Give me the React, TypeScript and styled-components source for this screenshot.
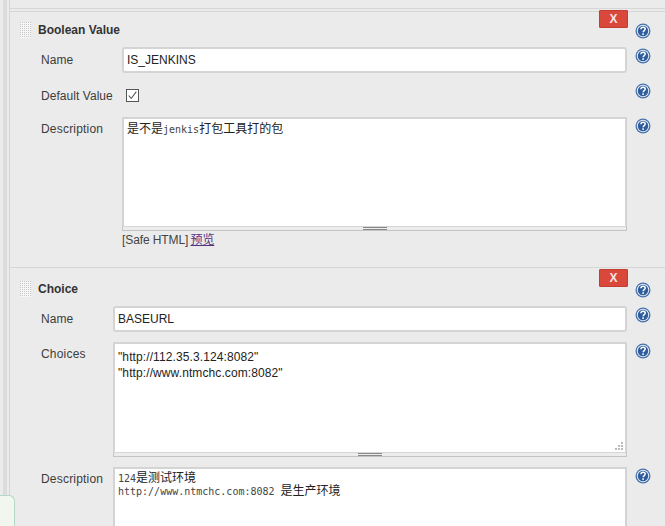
import styled, { createGlobalStyle } from "styled-components";

const GlobalStyle = createGlobalStyle`
  html, body {
    margin: 0;
    padding: 0;
    height: 526px;
    overflow: hidden;
    background: #ebebeb;
  }
  body {
    font-family: "Liberation Sans", Arial, sans-serif;
    font-size: 12px;
    color: #333;
  }
`;

const HelpIcon = ({ top = 1 }: { top?: number }) => (
  <HelpSlot $top={top}>
    <HelpSvg viewBox="0 0 16 16" aria-hidden="true">
      <circle cx="8" cy="8" r="7.5" fill="#4672ad" />
      <circle cx="8" cy="8" r="6.2" fill="#e3ebf5" />
      <circle cx="8" cy="8" r="5.2" fill="#2f5c9a" />
      <path
        d="M5.9 6.3c.1-1.300 1-2 2.200-2 1.300 0 2.100.8 2.100 1.800 0 1.500-2 1.500-2 3.100"
        fill="none"
        stroke="#fff"
        strokeWidth="1.500"
      />
      <rect x="7.300" y="10.300" width="1.600" height="1.600" fill="#fff" />
    </HelpSvg>
  </HelpSlot>
);

const GripDots = ({ id }: { id: string }) => (
  <DragHandle viewBox="0 0 11 16" aria-hidden="true">
    <defs>
      <pattern id={id} width="2" height="2" patternUnits="userSpaceOnUse">
        <rect width="2" height="2" fill="#f6f6f6" />
        <rect width="1" height="1" fill="#c6c6c6" />
      </pattern>
    </defs>
    <rect width="11" height="16" fill={`url(#${id})`} />
  </DragHandle>
);

const ResizeDots = () => (
  <ResizeMark viewBox="0 0 9 9" aria-hidden="true">
    <rect x="6" y="0" width="2" height="2" fill="#bbb" />
    <rect x="3" y="3" width="2" height="2" fill="#bbb" />
    <rect x="6" y="3" width="2" height="2" fill="#bbb" />
    <rect x="0" y="6" width="2" height="2" fill="#bbb" />
    <rect x="3" y="6" width="2" height="2" fill="#bbb" />
    <rect x="6" y="6" width="2" height="2" fill="#bbb" />
  </ResizeMark>
);

export default function App() {
  return (
    <>
      <GlobalStyle />
      <Page>
        <Rail />
        <Sections>
          <PreviousSection />
          <Section $first>
            <SectionHeader>
              <GripDots id="grip-boolean" />
              <SectionTitle>Boolean Value</SectionTitle>
              <DeleteButton>X</DeleteButton>
              <HelpIcon top={14} />
            </SectionHeader>
            <Form $labelWidth={112}>
              <Label>Name</Label>
              <TextInput>IS_JENKINS</TextInput>
              <HelpIcon />

              <Label>Default Value</Label>
              <CheckCell>
                <CheckBox>
                  <svg viewBox="0 0 13 13" width="11" height="11">
                    <path d="M2 6.500l3 3.500 6-8" fill="none" stroke="#555" strokeWidth="1.300" />
                  </svg>
                </CheckBox>
              </CheckCell>
              <HelpIcon top={0} />

              <Label $area>Description</Label>
              <div>
                <TextBlock $height={109} $padTop={2}>
                  <RichLine>
                    是不是<Mono>jenkis</Mono>打包工具打的包
                  </RichLine>
                </TextBlock>
                <Grippie />
                <SafeHtml>
                  [Safe HTML] <PreviewLink>预览</PreviewLink>
                </SafeHtml>
              </div>
              <HelpIcon />
            </Form>
          </Section>

          <Section>
            <SectionHeader>
              <GripDots id="grip-choice" />
              <SectionTitle>Choice</SectionTitle>
              <DeleteButton>X</DeleteButton>
              <HelpIcon top={14} />
            </SectionHeader>
            <Form $labelWidth={103}>
              <Label>Name</Label>
              <TextInput>BASEURL</TextInput>
              <HelpIcon />

              <Label $area>Choices</Label>
              <div>
                <TextBlock $height={110} $padTop={5}>
                  <PlainLine>"http://112.35.3.124:8082"</PlainLine>
                  <PlainLine>"http://www.ntmchc.com:8082"</PlainLine>
                  <ResizeDots />
                </TextBlock>
                <Grippie />
              </div>
              <HelpIcon />

              <Label $area>Description</Label>
              <TextBlock $height={80} $padTop={1}>
                <RichLine>
                  <Mono>124</Mono>是测试环境
                </RichLine>
                <RichLine>
                  <Mono>http://www.ntmchc.com:8082 </Mono>是生产环境
                </RichLine>
              </TextBlock>
              <HelpIcon />
            </Form>
          </Section>
        </Sections>
      </Page>
      <FloatingTab />
    </>
  );
}

const Page = styled.div`
  display: flex;
  height: 526px;
  overflow: hidden;
  padding-left: 3px;
  background: #ebebeb;
`;

const Rail = styled.div`
  flex: 0 0 4px;
  margin-right: 2px;
  background: #dcdcdc;
`;

const Sections = styled.div`
  flex: 1;
  min-width: 0;
`;

const PreviousSection = styled.div`
  height: 8px;
  border-left: 1px solid #d6d6d6;
  border-bottom: 1px solid #d6d6d6;
`;

const Section = styled.section<{ $first?: boolean }>`
  position: relative;
  box-sizing: border-box;
  height: ${(p) => (p.$first ? "258px" : "259px")};
  padding-right: 14px;
  border-left: 1px solid #d6d6d6;
  border-top: ${(p) => (p.$first ? "0" : "1px solid #d6d6d6")};

  ${(p) =>
    p.$first &&
    `&::before {
      content: "";
      position: absolute;
      left: 0;
      right: 0;
      top: 2px;
      border-top: 1px solid #d6d6d6;
    }`}
`;

const SectionHeader = styled.header`
  position: relative;
  display: flex;
  align-items: flex-start;
  height: 38px;
  padding-left: 10px;
`;

const DragHandle = styled.svg`
  width: 11px;
  height: 16px;
  margin: 13px 7px 0 0;
`;

const SectionTitle = styled.h3`
  margin: 14px auto 0 0;
  font-size: 12px;
  line-height: 14px;
  font-weight: 700;
  color: #333;
`;

const DeleteButton = styled.button`
  width: 29px;
  height: 18px;
  margin: 1px -1px 0 0;
  padding: 0;
  border: 1px solid #c43d31;
  border-radius: 1px;
  background: #d9483b;
  color: #f8e4e0;
  font: 700 12px "Liberation Sans", Arial, sans-serif;
`;

const HelpSlot = styled.div<{ $top: number }>`
  width: 24px;
  padding-top: ${(p) => p.$top}px;
  display: flex;
  justify-content: flex-end;
`;

const HelpSvg = styled.svg`
  width: 16px;
  height: 16px;
  display: block;
`;

const Form = styled.div<{ $labelWidth: number }>`
  display: grid;
  grid-template-columns: ${(p) => p.$labelWidth}px 1fr 24px;
  row-gap: 10px;
`;

const Label = styled.div<{ $area?: boolean }>`
  padding: ${(p) => (p.$area ? "5px" : "6px")} 0 0 31px;
  line-height: 14px;
  letter-spacing: ${(p) => (p.$area ? "0.2px" : "0.05px")};
  color: #3c3c3c;
`;

const TextInput = styled.div`
  box-sizing: border-box;
  height: 26px;
  padding: 0 3px;
  border: 2px solid #d4d4d4;
  border-radius: 3px;
  background: #fff;
  line-height: 23px;
  color: #222;
`;

const CheckCell = styled.div`
  height: 24px;
  padding-left: 4px;
  display: flex;
  align-items: center;
`;

const CheckBox = styled.div`
  box-sizing: border-box;
  width: 13px;
  height: 13px;
  border: 1px solid #555;
  background: #fff;
  display: flex;
  align-items: center;
  justify-content: center;
`;

const TextBlock = styled.div<{ $height: number; $padTop: number }>`
  position: relative;
  box-sizing: border-box;
  height: ${(p) => p.$height}px;
  padding: ${(p) => p.$padTop}px 0 0 3px;
  border: 2px solid #d4d4d4;
  border-bottom-width: 0;
  background: #fff;
`;

const ResizeMark = styled.svg`
  position: absolute;
  right: 1px;
  bottom: 1px;
  width: 9px;
  height: 9px;
`;

const RichLine = styled.div`
  height: 13px;
  font-family: "Noto Sans CJK SC", sans-serif;
  font-size: 12px;
  line-height: 13px;
  white-space: pre;
  color: #222;
`;

const Mono = styled.span`
  font-family: "DejaVu Sans Mono", monospace;
  font-size: 10px;
  color: #444;
`;

const PlainLine = styled.div`
  line-height: 16px;
  letter-spacing: 0.1px;
  color: #222;
`;

const Grippie = styled.div`
  box-sizing: border-box;
  height: 5px;
  border: 1px solid #c4c4c4;
  border-top-color: #d6d6d6;
  background: linear-gradient(#888, #888) center 0 / 24px 1px no-repeat,
    linear-gradient(#888, #888) center 2px / 24px 1px no-repeat, #ececec;
`;

const SafeHtml = styled.div`
  line-height: 14px;
  height: 16px;
  padding-top: 1px;
  letter-spacing: -0.1px;
  color: #444;
`;

const PreviewLink = styled.a`
  margin-left: -1px;
  font-family: "Noto Sans CJK SC", sans-serif;
  color: #55307f;
  text-decoration: underline;
`;

const FloatingTab = styled.div`
  position: fixed;
  left: 0;
  bottom: 0;
  width: 14px;
  height: 30px;
  border: 1px solid #b4d8c4;
  border-left: 0;
  border-bottom: 0;
  border-top-right-radius: 6px;
  background: #f1f6ee;
`;
